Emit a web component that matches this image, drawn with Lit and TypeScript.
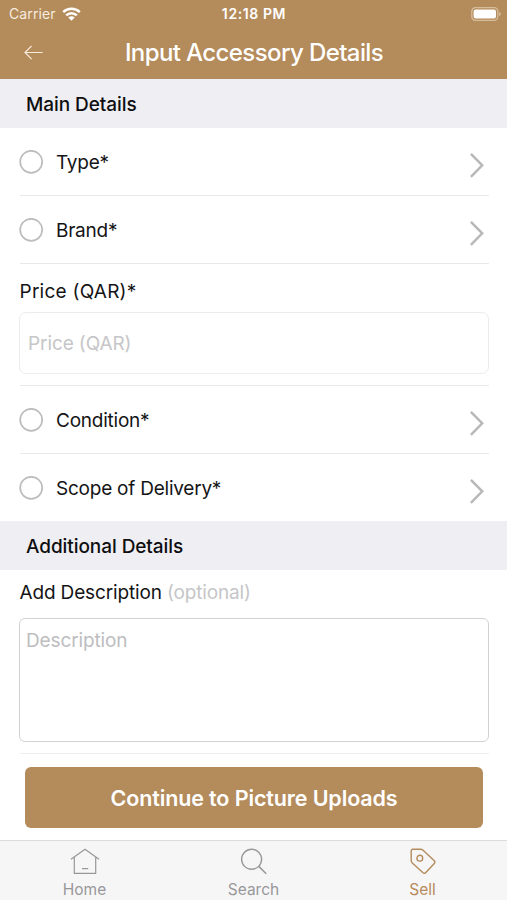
import { LitElement, html, css, svg } from "lit";
import { customElement, property } from "lit/decorators.js";

@customElement("option-row")
class OptionRow extends LitElement {
  @property() label = "";
  @property({ type: Boolean }) last = false;

  static styles = css`
    :host { display: block; height: 68px; }
    :host([last]) { height: 67px; }
    .row {
      box-sizing: border-box; height: 100%; margin: 0 18px 0 20px;
      border-bottom: 1px solid #e9e9ea; display: flex; align-items: center;
    }
    :host([last]) .row { border-bottom: none; }
    .ring { display: block; margin: 0 13px 0 -1px; }
    .label { flex: 1; font-size: 19px; line-height: 24px; letter-spacing: -0.23px; padding-top: 2px; }
    .chevron { display: block; margin: 6px 4px 0 0; }
  `;

  render() {
    return html`<div class="row">
      <svg class="ring" width="24" height="24" viewBox="0 0 24 24" fill="none" stroke="#bcbcbc" stroke-width="1.7">
        <circle cx="12.2" cy="11.8" r="11" />
      </svg>
      <div class="label">${this.label}</div>
      <svg class="chevron" width="16" height="26" viewBox="0 0 16 26" fill="none" stroke="#b8b8b8" stroke-width="2.5">
        <path d="M1.9 1.8 13.2 13.3 1.9 24.8" />
      </svg>
    </div>`;
  }
}

const homeIcon = svg`<path d="M1 11.2 15 1.2 29 11.2M4.3 9V25.4H25.7V9M12 20.6H18.2" />`;
const searchIcon = svg`<circle cx="12.6" cy="11.3" r="10" stroke-width="1.4" /><path stroke-width="1.5" d="M19.8 18.4 27.2 25.8" />`;
const sellIcon = svg`<g stroke-width="1.4" stroke-linejoin="round"><path d="M4.8 1.3H12.6C13.5 1.3 14.4 1.6 15.1 2.2L26.3 12.8C27.1 13.6 27.1 14.6 26.3 15.4L17.6 24.7C16.8 25.5 15.8 25.5 15 24.8L4.3 15C3.6 14.3 3.2 13.5 3.2 12.5V2.9C3.2 1.9 3.8 1.3 4.8 1.3Z" /><circle cx="11.8" cy="10.2" r="2.9" /></g>`;

@customElement("app-root")
class AppRoot extends LitElement {
  static styles = css`
    :host {
      display: flex; flex-direction: column; width: 507px; height: 900px; overflow: hidden;
      background: #fff; color: #141416; font-family: Inter, "Liberation Sans", sans-serif;
      --brand: #b48b5b;
    }
    svg { display: block; }
    .header { height: 79px; background: var(--brand); color: #fff; flex: none; }
    .status { height: 27px; display: grid; grid-template-columns: 1fr auto 1fr; align-items: center; font-size: 14px; line-height: 18px; }
    .carrier { display: flex; align-items: center; gap: 6px; padding-left: 9px; color: #f6ecdf; letter-spacing: 0.1px; }
    .time { font-weight: 600; letter-spacing: 0.6px; margin-left: 1px; }
    .battery { justify-self: end; margin-right: 6px; }
    .nav { height: 52px; display: grid; grid-template-columns: 80px 1fr 80px; align-items: center; }
    .back { margin: -2px 0 0 24px; }
    .title { text-align: center; font-size: 24px; line-height: 30px; font-weight: 500; letter-spacing: -0.6px; margin-left: 1px; }
    .section {
      box-sizing: border-box; height: 49px; flex: none; background: #efeef3; padding-left: 26px; padding-top: 1px;
      font-size: 19px; line-height: 49px; font-weight: 500; letter-spacing: -0.07px; color: #0e0e10;
    }
    .block { margin: 0 18px 0 20px; border-bottom: 1px solid #e9e9ea; box-sizing: border-box; flex: none; }
    .price { height: 122px; }
    .desc { height: 184px; border-color: #eeeeef; }
    .label { font-size: 19px; line-height: 24px; }
    .price .label { padding-top: 16px; letter-spacing: 0.25px; margin-left: -0.5px; }
    .desc .label { padding-top: 11px; letter-spacing: -0.15px; margin-left: -0.5px; }
    .muted { color: #c6c6c8; }
    .input {
      box-sizing: border-box; margin: 8px 0 0 -1px; height: 62px; border: 1px solid #ececed; border-radius: 7px;
      padding: 1px 0 0 8px; font-size: 19px; line-height: 60px; letter-spacing: -0.1px; color: #c6c6c8;
    }
    .area {
      box-sizing: border-box; margin: 13px 0 0 -1px; height: 124px; border: 1.5px solid #d2d2d3; border-radius: 6px;
      padding: 10px 6px; font-size: 19px; line-height: 24px; letter-spacing: -0.12px; color: #bdbdbf;
    }
    .button {
      flex: none; height: 61px; margin: 13px 24px 0 25px; border-radius: 6px; background: var(--brand); color: #fff;
      display: flex; align-items: center; justify-content: center; font-size: 21.5px; font-weight: 600; letter-spacing: -0.12px;
    }
    .tabs {
      box-sizing: border-box; margin-top: 12px; height: 60px; flex: none; background: #f7f6f7; border-top: 1px solid #dcdcde;
      display: grid; grid-template-columns: repeat(3, 1fr);
    }
    .tab { display: flex; flex-direction: column; align-items: center; color: #98989a; font-size: 15.5px; line-height: 20px; padding-top: 7px; gap: 5px; }
    .tab.active { color: var(--brand); }
  `;

  private tab(label: string, icon: unknown, active = false) {
    return html`<div class="tab ${active ? "active" : ""}">
      <svg width="30" height="27" viewBox="0 0 30 27" fill="none" stroke="currentColor" stroke-width="1.2">${icon}</svg>
      <span>${label}</span>
    </div>`;
  }

  render() {
    return html`
      <div class="header">
        <div class="status">
          <div class="carrier">
            <span>Carrier</span>
            <svg width="19" height="14" viewBox="0 0 19 14" fill="none" stroke="#fff" stroke-width="2.5">
              <path d="M1.2 5.2A11.8 11.8 0 0 1 17.8 5.2M4.2 8.4A7.5 7.5 0 0 1 14.8 8.4" />
              <path fill="#fff" stroke="none" d="M9.5 13.8 6.3 10.6A4.5 4.5 0 0 1 12.7 10.6Z" />
            </svg>
          </div>
          <div class="time">12:18 PM</div>
          <svg class="battery" width="30" height="14" viewBox="0 0 30 14">
            <rect x="0.8" y="0.7" width="26" height="12.6" rx="3.6" fill="none" stroke="#d6bd9c" stroke-width="1.3" />
            <rect x="2.6" y="2.4" width="22.4" height="9.2" rx="2" fill="#fff" />
            <path d="M28.2 4.8Q30 6 30 7T28.2 9.2Z" fill="#d6bd9c" />
          </svg>
        </div>
        <div class="nav">
          <svg class="back" width="20" height="15" viewBox="0 0 20 15" fill="none" stroke="#f8ecda" stroke-width="1.2">
            <path d="M18.6 7.5H1M7.6 0.8 1 7.5 7.6 14.2" />
          </svg>
          <div class="title">Input Accessory Details</div>
        </div>
      </div>
      <div class="section">Main Details</div>
      <option-row label="Type*"></option-row>
      <option-row label="Brand*"></option-row>
      <div class="block price">
        <div class="label">Price (QAR)*</div>
        <div class="input">Price (QAR)</div>
      </div>
      <option-row label="Condition*"></option-row>
      <option-row label="Scope of Delivery*" last></option-row>
      <div class="section">Additional Details</div>
      <div class="block desc">
        <div class="label">Add Description <span class="muted">(optional)</span></div>
        <div class="area">Description</div>
      </div>
      <div class="button"><span>Continue to Picture Uploads</span></div>
      <div class="tabs">
        ${this.tab("Home", homeIcon)} ${this.tab("Search", searchIcon)} ${this.tab("Sell", sellIcon, true)}
      </div>
    `;
  }
}
